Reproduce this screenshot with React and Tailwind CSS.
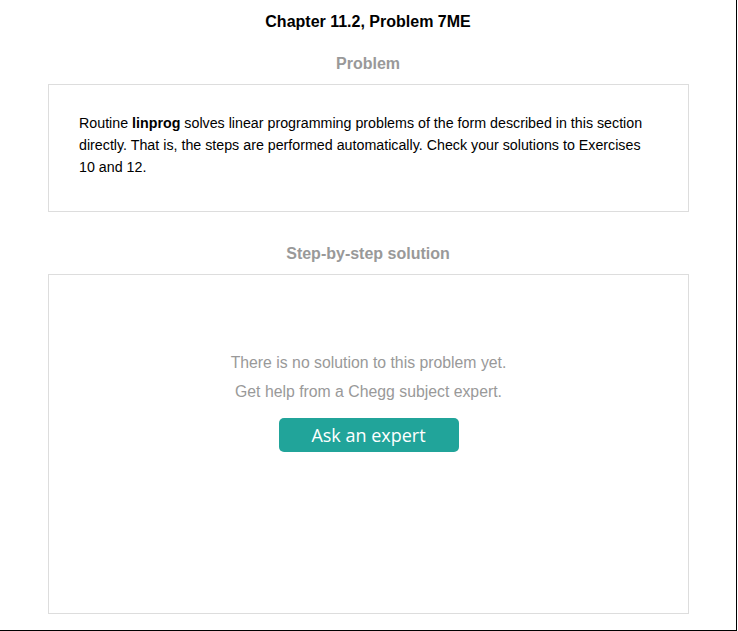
import React from "react";

const App = () => {
  return (
    <main className="w-[737px] h-[631px] bg-white border-r border-b border-black font-['Liberation_Sans',Arial,sans-serif] overflow-hidden">
      {/* Title */}
      <h1 className="pt-[12px] text-center text-[16px] leading-[19px] font-bold text-black">
        Chapter 11.2, Problem 7ME
      </h1>

      {/* Problem */}
      <h2 className="mt-[23px] text-center text-[16px] leading-[19px] font-bold text-[#999]">
        Problem
      </h2>
      <section className="mx-[48px] mt-[11px] w-[641px] h-[128px] border border-[#ddd] pl-[30px] pr-[34px] pt-[27px]">
        <p className="text-[14.25px] leading-[22px] text-black">
          Routine <b>linprog</b> solves linear programming problems of the form described in this section
          directly. That is, the steps are performed automatically. Check your solutions to Exercises
          10 and 12.
        </p>
      </section>

      {/* Solution */}
      <h2 className="mt-[32px] text-center text-[16px] leading-[19px] font-bold text-[#999]">
        Step-by-step solution
      </h2>
      <section className="mx-[48px] mt-[11px] w-[641px] h-[340px] border border-[#ddd] flex flex-col items-center pt-[77px]">
        <p className="text-[15.8px] leading-[22px] text-[#999]">There is no solution to this problem yet.</p>
        <p className="mt-[7px] text-[15.8px] leading-[22px] text-[#999]">Get help from a Chegg subject expert.</p>
        <button className="mt-[15px] w-[180px] h-[34px] rounded-[5px] bg-[#21a49a] text-white text-[18px] font-['Open_Sans',sans-serif]">
          Ask an expert
        </button>
      </section>
    </main>
  );
};

export default App;
